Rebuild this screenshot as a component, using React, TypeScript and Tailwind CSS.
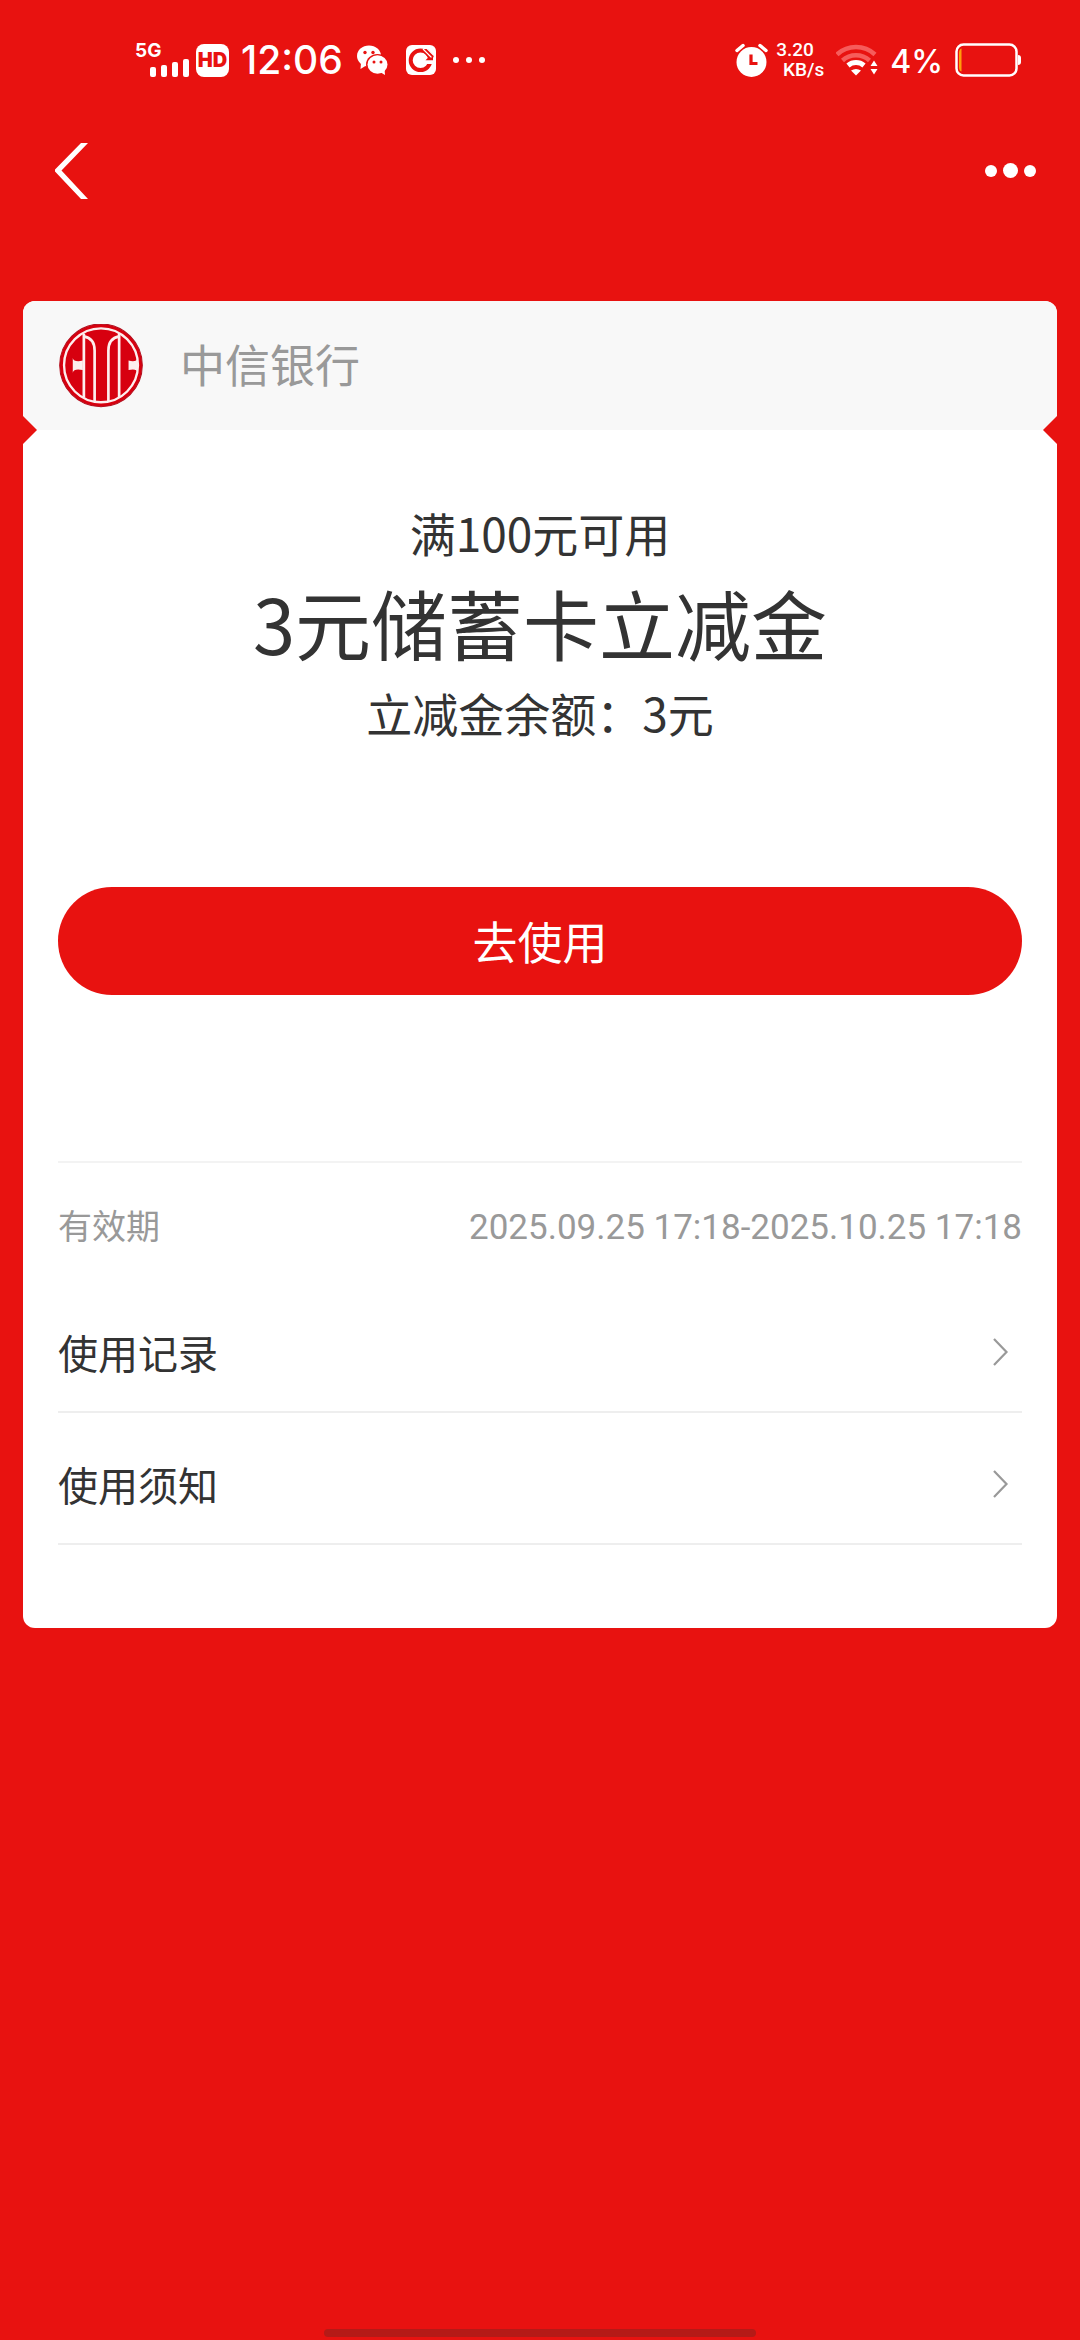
import { useState } from 'react';

interface LinkRowProps {
  label: string;
  href: string;
}

const coupon = {
  bank: '中信银行',
  condition: '满100元可用',
  title: '3元储蓄卡立减金',
  balance: '立减金余额：3元',
  validity: '2025.09.25 17:18-2025.10.25 17:18',
};

function SignalIcon() {
  return (
    <svg width="40" height="18" viewBox="0 0 40 18" fill="currentColor" aria-hidden="true">
      <rect x="0" y="8" width="6" height="10" rx="2" />
      <rect x="11" y="6" width="6" height="12" rx="2" />
      <rect x="22" y="3" width="6" height="15" rx="2" />
      <rect x="33" y="0" width="6" height="18" rx="2" />
    </svg>
  );
}

function WeChatIcon() {
  return (
    <svg width="31" height="31" viewBox="0 0 31 31" aria-hidden="true">
      <ellipse cx="12" cy="11" rx="12" ry="10.5" fill="#fff" />
      <path d="M4 18 L3.500 24 L10 20 Z" fill="#fff" />
      <ellipse cx="20.500" cy="19.500" rx="11.500" ry="10.500" fill="#e81210" />
      <ellipse cx="20.500" cy="19.500" rx="10" ry="9.200" fill="#fff" />
      <path d="M23 27 L28 30 L27.500 24 Z" fill="#fff" />
      <circle cx="8" cy="7.500" r="1.700" fill="#e81210" />
      <circle cx="16" cy="7.500" r="1.700" fill="#e81210" />
      <circle cx="17" cy="17" r="1.500" fill="#e81210" />
      <circle cx="24" cy="17" r="1.500" fill="#e81210" />
    </svg>
  );
}

function BankAppIcon() {
  return (
    <svg width="30" height="30" viewBox="0 0 30 30" aria-hidden="true">
      <rect width="30" height="30" rx="6" fill="#fff" />
      <circle cx="14.500" cy="15.300" r="9.800" fill="none" stroke="#e81210" strokeWidth="4" />
      <path d="M21 15.500 L27.500 12.500 V19 H21 Z" fill="#fff" />
      <path d="M15 4 L22 4 L28 10.500 L27 13 H22.500 Z" fill="#e81210" />
      <path d="M17 4 L25.500 12.500 M20.500 3 L28 10.500" stroke="#fff" strokeWidth="1.200" fill="none" />
      <path d="M14.500 9.800 L20 15.300 L14.500 20.800 L9 15.300 Z" fill="#fff" />
      <path d="M19.500 15.300 L22 12.800 H27 V15.300 Z" fill="#e81210" />
    </svg>
  );
}

function AlarmIcon() {
  return (
    <svg width="33" height="34" viewBox="0 0 33 34" aria-hidden="true">
      <circle cx="16.500" cy="19" r="15" fill="#fff" />
      <path d="M2 7.500 L8 2.500 M31 7.500 L25 2.500" stroke="#fff" strokeWidth="3.500" strokeLinecap="round" />
      <path d="M16 11.500 V20.500 H22.500" stroke="#e81210" strokeWidth="3.200" fill="none" />
    </svg>
  );
}

function WifiIcon() {
  return (
    <svg width="42" height="32" viewBox="0 0 42 32" aria-hidden="true">
      <path d="M1 10.500 A28 28 0 0 1 39 10.500" stroke="#f65c5b" strokeWidth="4.500" fill="none" />
      <path d="M6.500 16.500 A20 20 0 0 1 33.500 16.500" stroke="#f65c5b" strokeWidth="4.500" fill="none" />
      <path d="M12 21.500 A12.500 12.500 0 0 1 28 21.500" stroke="#fff" strokeWidth="5" fill="none" />
      <path d="M15 26.500 Q20 23.500 25 26.500 L20 31.500 Z" fill="#fff" />
      <path d="M34.500 22 L38 16.500 L41.500 22 Z M34.500 25 L38 30.500 L41.500 25 Z" fill="#fff" />
    </svg>
  );
}

function BatteryIcon() {
  return (
    <svg width="66" height="34" viewBox="0 0 66 34" aria-hidden="true">
      <rect x="1.500" y="1.500" width="60" height="31" rx="7" stroke="#fff" strokeWidth="2.500" fill="none" />
      <path d="M6.500 5.500 Q4 6 4 10 V24 Q4 28 6.500 28.500 Z" fill="#ff9d0a" />
      <path d="M63 12 Q66 12 66 15 V19 Q66 22 63 22 Z" fill="#fff" />
    </svg>
  );
}

function BankLogo() {
  return (
    <svg width="84" height="84" viewBox="9 13 250 250" aria-hidden="true">
      <circle cx="134" cy="136" r="123" fill="#d7000f" stroke="#b3101f" strokeWidth="3" />
      <circle cx="134" cy="136" r="110" fill="none" stroke="#fdeeee" strokeWidth="7" />
      <g fill="none" stroke="#fdeeee" strokeWidth="8">
        <path d="M83 42 V232 M188 42 V232" />
        <path d="M83 50 C106 54 115 72 115 92 V243 M188 50 C165 54 156 72 156 92 V243" />
      </g>
      <path d="M50 114 Q53 128 80 122 V150 Q53 144 50 158 Z" fill="#fdeeee" />
      <path d="M244 114 Q240 128 216 122 V150 Q240 144 244 158 Z" fill="#fdeeee" />
    </svg>
  );
}

function StatusBar() {
  return (
    <div className="flex h-30 items-center justify-between pr-[59px] pl-[135px]">
      <div className="flex items-center">
        <div className="flex w-[55px] flex-col">
          <span className="text-[19px] leading-4 font-bold">5G</span>
          <span className="self-end">
            <SignalIcon />
          </span>
        </div>
        <span className="ml-[6px] flex h-[33px] w-[33px] items-center justify-center rounded-lg bg-white text-[20px] font-black text-[#e81210]">
          HD
        </span>
        <span className="ml-3 text-[39px] leading-[40px] font-medium">12:06</span>
        <span className="ml-[14px]">
          <WeChatIcon />
        </span>
        <span className="ml-[18px]">
          <BankAppIcon />
        </span>
        <span className="ml-[17px] flex gap-[7px]">
          <i className="size-[6px] rounded-full bg-white" />
          <i className="size-[6px] rounded-full bg-white" />
          <i className="size-[6px] rounded-full bg-white" />
        </span>
      </div>

      <div className="flex items-center">
        <AlarmIcon />
        <div className="ml-2 flex w-[48px] flex-col font-[Roboto] text-[19px] leading-5 font-medium">
          <span>3.20</span>
          <span className="self-end">KB/s</span>
        </div>
        <span className="ml-3">
          <WifiIcon />
        </span>
        <span className="ml-3 pt-1 text-[32px] leading-[34px] font-medium">4%</span>
        <span className="ml-3">
          <BatteryIcon />
        </span>
      </div>
    </div>
  );
}

function NavBar() {
  return (
    <header className="flex h-[101px] items-center justify-between pr-11 pl-[54px]">
      <button type="button" aria-label="返回">
        <svg width="36" height="58" viewBox="0 0 36 58" fill="none" aria-hidden="true">
          <path d="M27 1 H34 L7.500 28.500 L34 57 H27 L1 29.500 V27.500 Z" fill="#fff" />
        </svg>
      </button>
      <button type="button" aria-label="更多" className="flex items-center gap-[6px]">
        <i className="size-3 rounded-full bg-white" />
        <i className="size-[15px] rounded-full bg-white" />
        <i className="size-3 rounded-full bg-white" />
      </button>
    </header>
  );
}

function LinkRow({ label, href }: LinkRowProps) {
  return (
    <a
      href={href}
      className="flex h-[132px] items-center justify-between border-b-2 border-[#eeeeee] pt-3 text-[40px] leading-[60px] text-[#333333]"
    >
      {label}
      <svg width="17" height="30" viewBox="0 0 17 30" fill="none" className="mr-[13px]" aria-hidden="true">
        <path d="M2 2 L14.500 15 L2 28" stroke="#999999" strokeWidth="2.200" />
      </svg>
    </a>
  );
}

function CouponCard() {
  const [used, setUsed] = useState(false);

  return (
    <main className="mx-[23px] mt-20 overflow-hidden rounded-xl bg-white">
      <div className="relative flex h-[129px] items-center bg-[#f8f8f8] pl-9">
        <BankLogo />
        <span className="ml-[37px] pb-1 text-[45px] leading-[60px] text-[#999999]">{coupon.bank}</span>
        {/* ticket notches */}
        <i className="absolute -bottom-[14px] -left-[14px] size-7 bg-[#e81210] [clip-path:polygon(50%_0,100%_50%,50%_100%,0_50%)]" />
        <i className="absolute -right-[14px] -bottom-[14px] size-7 bg-[#e81210] [clip-path:polygon(50%_0,100%_50%,50%_100%,0_50%)]" />
      </div>

      <div className="px-[35px] pt-[72px] pb-[83px]">
        <div className="text-center text-[#333333]">
          <p className="text-[46px] leading-[60px]">{coupon.condition}</p>
          <h1 className="mt-[14px] text-[76px] leading-[92px]">{coupon.title}</h1>
          <p className="mt-[14px] text-[46px] leading-[60px]">{coupon.balance}</p>
        </div>

        <button
          type="button"
          disabled={used}
          onClick={() => setUsed(true)}
          className="mt-[145px] h-[108px] w-full rounded-full bg-[#e81210] text-[45px] leading-[60px] text-white"
        >
          去使用
        </button>

        <div className="mt-[166px] flex h-[120px] items-baseline justify-between border-t-2 border-[#f3f3f3] pt-[38px] text-[34px] leading-[48px] text-[#999999]">
          <span>有效期</span>
          <span className="font-[Roboto] text-[35px]">{coupon.validity}</span>
        </div>
        <LinkRow label="使用记录" href="#records" />
        <LinkRow label="使用须知" href="#notice" />
      </div>
    </main>
  );
}

function App() {
  return (
    <div className="flex min-h-screen flex-col bg-[#e81210] font-['Noto_Sans_CJK_SC',sans-serif]">
      <div className="font-[Inter,sans-serif] text-white">
        <StatusBar />
      </div>
      <NavBar />
      <CouponCard />
      <div className="mx-auto mt-auto mb-[3px] h-2 w-2/5 rounded-full bg-[#b51a17]" />
    </div>
  );
}

export default App;
